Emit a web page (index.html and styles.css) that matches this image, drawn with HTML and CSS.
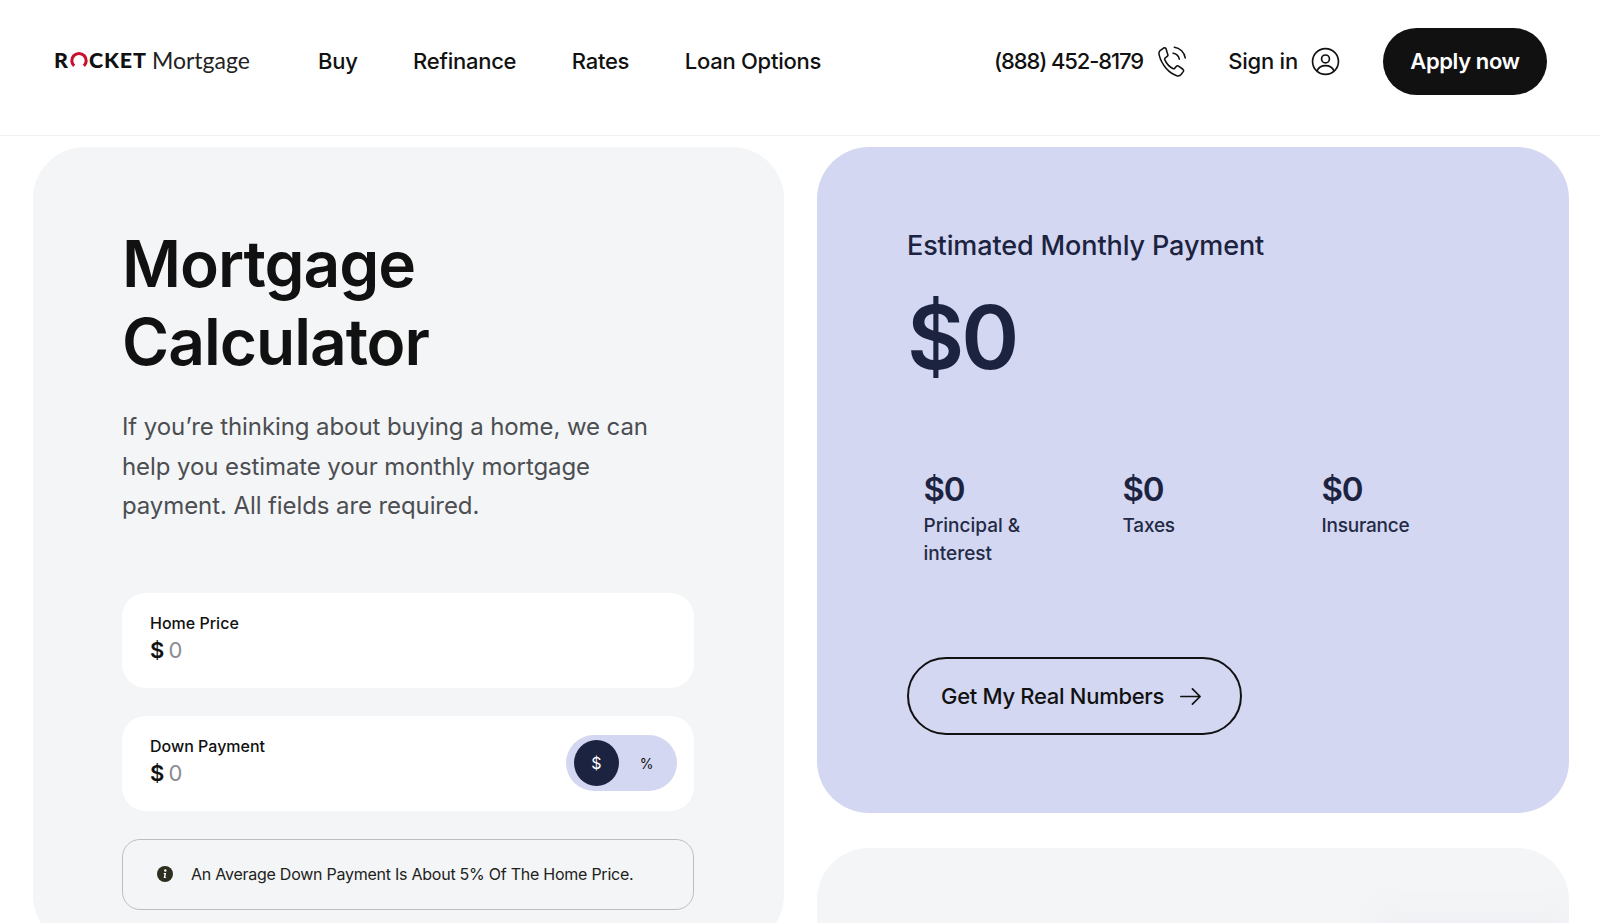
FILE: index.html
```html
<!DOCTYPE html>
<html lang="en">
<head>
    <meta charset="UTF-8">
    <title>Mortgage Calculator</title>
    <link rel="stylesheet" href="styles.css">
</head>
<body>
    <header class="header">
        <div class="logo"><span class="logo-rocket">R<svg class="logo-o" viewBox="0 0 20 20"><path d="M4.6 16.6A8 8 0 1 1 15.4 16.6" fill="none" stroke="#c8102e" stroke-width="3.4"/></svg>CKET</span> <span class="logo-mortgage">Mortgage</span></div>
        <nav class="nav">
            <a>Buy</a>
            <a>Refinance</a>
            <a>Rates</a>
            <a>Loan Options</a>
        </nav>
        <div class="header-right">
            <a class="header-link phone-link"><span class="phone">(888) 452-8179</span>
                <svg class="phone-icon" viewBox="2 1.500 24 26" fill="none" stroke="#111" stroke-width="1.300" stroke-linecap="round" stroke-linejoin="round">
                    <path d="M6.5 3.2 3.6 5.4c-1 .8-1.1 2.2-.8 3.6 1 4.300 3.200 8.200 6 11.400 2.400 2.800 5.400 5 8.800 6 1.400.4 2.800 0 3.600-1l1.800-2.400c.5-.7.300-1.500-.3-2l-3.600-2.600c-.7-.5-1.500-.4-2 .2l-1.200 1.500c-.4.500-1 .6-1.600.3-2.900-1.500-5.500-4.500-6.800-7.500-.2-.6 0-1.100.5-1.500l1.500-1.100c.7-.5.800-1.300.4-2L8.600 3.800c-.5-.8-1.400-1-2.100-.6z"/>
                    <path d="M14.500 7.500c2.700.4 4.700 2.400 5.200 5"/>
                    <path d="M15.500 2.500c4.800.6 8.500 4.300 9.200 9"/>
                </svg>
            </a>
            <a class="header-link">Sign in
                <svg class="header-icon" viewBox="0 0 28 28" fill="none" stroke="#111" stroke-width="1.6">
                    <circle cx="14" cy="14" r="12.500"/>
                    <circle cx="14" cy="11.500" r="3.800"/>
                    <path d="M5.800 23.200c1.400-3.500 4.300-5.200 8.200-5.200s6.800 1.700 8.200 5.200"/>
                </svg>
            </a>
            <a class="apply-btn">Apply now</a>
        </div>
    </header>

    <main class="content">
        <section class="card card-form">
            <h1 class="title">Mortgage<br>Calculator</h1>
            <p class="intro">If you’re thinking about buying a home, we can help you estimate your monthly mortgage payment. All fields are required.</p>

            <div class="field">
                <div>
                    <div class="field-label">Home Price</div>
                    <div class="field-value"><b>$</b> <span>0</span></div>
                </div>
            </div>
            <div class="field">
                <div>
                    <div class="field-label">Down Payment</div>
                    <div class="field-value"><b>$</b> <span>0</span></div>
                </div>
                <div class="toggle">
                    <span class="toggle-item toggle-item-active">$</span>
                    <span class="toggle-item">%</span>
                </div>
            </div>
            <div class="note">
                <svg class="note-icon" viewBox="0 0 16 16">
                    <circle cx="8" cy="8" r="8" fill="#2e2e1f"/>
                    <circle cx="8.300" cy="4.500" r="1.200" fill="#fff"/>
                    <path d="M6.800 7h2.300l-.8 4.200h.9v.9H6.700l.7-4.200h-.7z" fill="#fff"/>
                </svg>
                An Average Down Payment Is About 5% Of The Home Price.
            </div>
        </section>

        <div class="side">
            <section class="card card-result">
                <h2 class="result-title">Estimated Monthly Payment</h2>
                <div class="result-total">$0</div>
                <div class="breakdown">
                    <div class="breakdown-item">
                        <div class="breakdown-value">$0</div>
                        <div class="breakdown-label">Principal &amp; interest</div>
                    </div>
                    <div class="breakdown-item">
                        <div class="breakdown-value">$0</div>
                        <div class="breakdown-label">Taxes</div>
                    </div>
                    <div class="breakdown-item">
                        <div class="breakdown-value">$0</div>
                        <div class="breakdown-label">Insurance</div>
                    </div>
                </div>
                <a class="numbers-btn">Get My Real Numbers
                    <svg class="numbers-arrow" viewBox="0 0 24 24" fill="none" stroke="#111" stroke-width="1.800" stroke-linecap="round" stroke-linejoin="round"><path d="M2 12h20M14 4l8 8-8 8"/></svg>
                </a>
            </section>
            <section class="card card-next"><div class="next-shade"></div></section>
        </div>
    </main>
</body>
</html>
```

FILE: styles.css
```css
*{margin:0;padding:0;box-sizing:border-box;}
html,body{height:923px;overflow:hidden;}
body{
    font-family:"Inter","Liberation Sans",sans-serif;
    background:#fff;color:#111;
}
/* header */
.header{
    height:136px;display:flex;align-items:center;
    padding:0 53px 13px 54px;
    border-bottom:1px solid #f1f2f4;
}
.logo{width:264px;font-size:21.500px;white-space:nowrap;display:flex;align-items:center;gap:5px;margin-top:-3px;}
.logo-rocket{font-family:"Lato","Liberation Sans",sans-serif;font-weight:900;letter-spacing:.9px;color:#111;display:flex;align-items:center;}
.logo-o{width:18px;height:18px;margin:0 1px;}
.logo-mortgage{font-family:"Lato","Liberation Sans",sans-serif;font-size:23px;color:#222;}
.nav{display:flex;gap:55.500px;font-size:22px;font-weight:500;letter-spacing:-.25px;}
.header-right{margin-left:auto;display:flex;align-items:center;font-size:22px;font-weight:500;letter-spacing:-.2px;}
.header-link{display:flex;align-items:center;gap:13px;margin-right:43px;}
.phone-link{gap:15px;margin-right:41px;}
.phone{letter-spacing:-1.100px;}
.header-icon{width:29px;height:29px;}
.phone-icon{width:29px;height:31px;}
.apply-btn{
    width:164px;height:67px;border-radius:34px;background:#111;color:#fff;
    display:flex;align-items:center;justify-content:center;font-weight:600;
    letter-spacing:-.4px;
}
/* cards */
.content{display:flex;gap:33px;padding:11px 31px 0 33px;align-items:flex-start;}
.card{border-radius:52px;width:752px;}
.card-form{background:#f3f5f7;padding:78px 90px 0 89px;height:800px;}
.side{display:flex;flex-direction:column;gap:35px;}
.card-result{background:#d3d7f1;height:666px;padding:82px 90px 0 90px;color:#1c2340;}
.card-next{background:#f3f5f7;height:120px;position:relative;overflow:hidden;}
.next-shade{position:absolute;left:560px;right:0;top:62px;height:60px;background:#eff1f3;filter:blur(10px);}
/* form */
.title{font-size:64px;font-weight:600;line-height:78px;letter-spacing:-1px;color:#111;}
.intro{font-size:24px;line-height:39.500px;color:#4c4e52;margin-top:26px;letter-spacing:-.09px;}
.field{
    height:95px;background:#fff;border-radius:24px;margin-top:28px;
    padding:0 17px 0 28px;display:flex;align-items:center;justify-content:space-between;
}
.intro + .field{margin-top:67px;}
.field-label{font-size:16px;font-weight:500;line-height:20px;}
.field-value{font-size:22px;line-height:34px;word-spacing:-2px;}
.field-value b{font-weight:600;}
.field-value span{color:#8a8c90;font-weight:400;}
.toggle{
    width:111px;height:56px;border-radius:28px;background:#d3d7f1;
    padding:5px 8px;display:flex;align-items:center;
}
.toggle-item{width:45px;height:46px;border-radius:50%;display:flex;align-items:center;justify-content:center;font-size:14px;}
.toggle-item + .toggle-item{margin-left:5px;}
.toggle-item-active{background:#1c2340;color:#fff;font-size:16px;font-weight:400;}
.note{
    height:71px;margin-top:28px;border:1px solid #bcbec2;border-radius:18px;
    padding:0 30px 0 34px;display:flex;align-items:center;gap:18px;font-size:16px;color:#22221a;letter-spacing:-.25px;
}
.note-icon{width:16px;height:16px;flex:none;}
/* result */
.result-title{font-size:27px;font-weight:500;line-height:33px;letter-spacing:-.12px;}
.result-total{font-size:88px;font-weight:600;line-height:100px;letter-spacing:-3px;margin-top:25px;}
.breakdown{display:flex;padding-left:16.500px;margin-top:82px;height:114px;}
.breakdown-item{width:199px;flex:none;}
.breakdown-value{font-size:33px;font-weight:600;line-height:40px;letter-spacing:-1.200px;}
.breakdown-label{font-size:19px;font-weight:500;line-height:28px;margin-top:3px;width:120px;color:#232a45;}
.breakdown-item + .breakdown-item .breakdown-label{width:auto;letter-spacing:-.2px;}
.numbers-btn{
    margin-top:74px;width:335px;height:78px;border:2px solid #111;border-radius:39px;
    display:flex;align-items:center;gap:15px;padding-left:32px;font-size:22px;font-weight:500;color:#111;letter-spacing:-.3px;
}
.numbers-arrow{width:23px;height:23px;}
```
